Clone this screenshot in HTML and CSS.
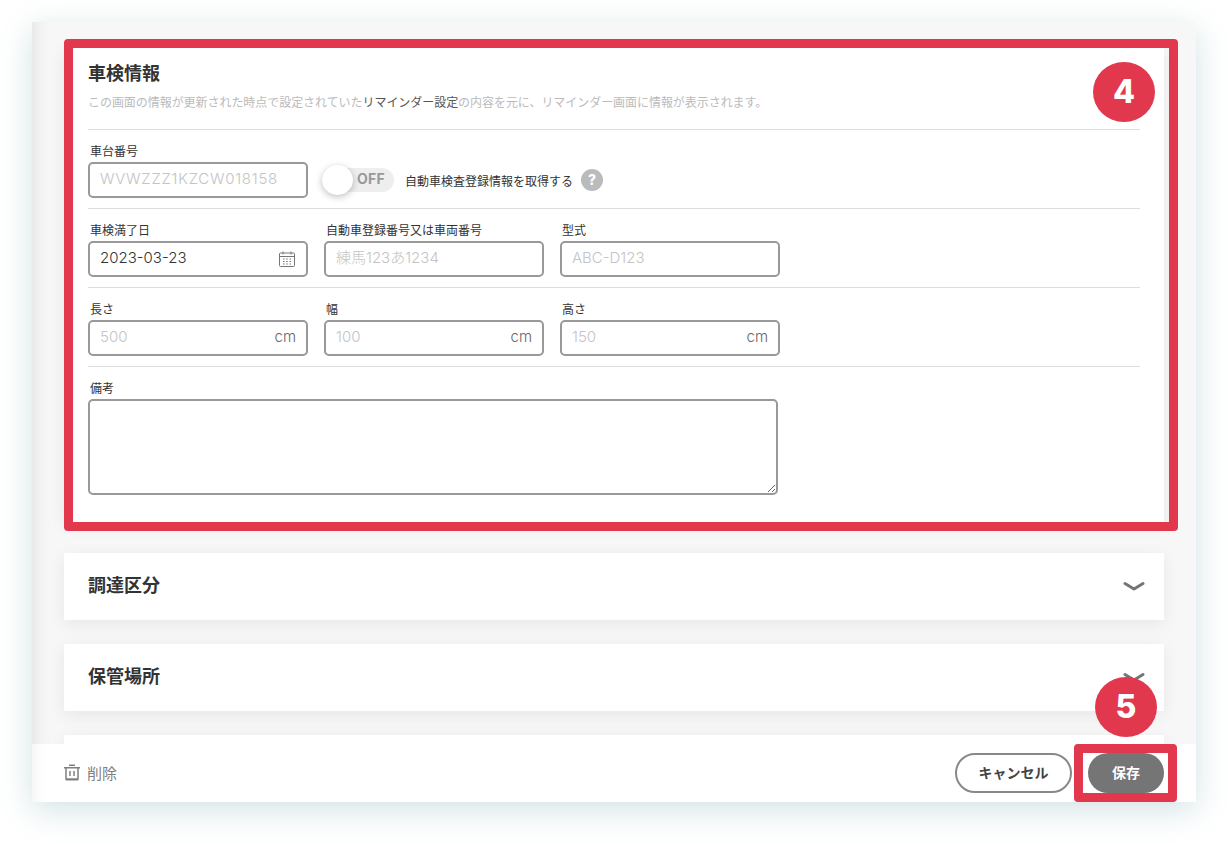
FILE: index.html
```html
<!DOCTYPE html>
<html lang="ja">
<head>
    <meta charset="UTF-8">
    <meta name="viewport" content="width=device-width, initial-scale=1.0">
    <title>車検情報</title>
    <link rel="stylesheet" href="styles.css">
</head>
<body>
    <div class="window">
        <div class="main">
            <div class="card-above"></div>

            <div class="card-wrap">
                <div class="card">
                    <h2 class="card-title">車検情報</h2>
                    <p class="card-desc">この画面の情報が更新された時点で設定されていた<span class="desc-link">リマインダー設定</span>の内容を元に、リマインダー画面に情報が表示されます。</p>

                    <div class="row">
                        <div class="field">
                            <label class="field-label">車台番号</label>
                            <div class="input-box"><input class="input input-vin" placeholder="WVWZZZ1KZCW018158"></div>
                        </div>
                        <div class="toggle-group">
                            <div class="toggle">
                                <span class="toggle-knob"></span>
                                <span class="toggle-text">OFF</span>
                            </div>
                            <span class="toggle-label">自動車検査登録情報を取得する</span>
                            <span class="help-icon">?</span>
                        </div>
                    </div>

                    <div class="row">
                        <div class="field">
                            <label class="field-label">車検満了日</label>
                            <div class="input-box">
                                <input class="input" value="2023-03-23">
                                <svg class="calendar-icon" width="18" height="18" viewBox="0 0 18 18" fill="none" stroke="#777" stroke-width="1">
                                    <rect x="1.5" y="3" width="15" height="13.5" rx="1"/>
                                    <path d="M1.5 6.5h15M5 1.5v3M13 1.5v3"/>
                                    <path d="M5 9h1.5M8.25 9h1.5M11.5 9h1.5M5 11.5h1.5M8.25 11.5h1.5M11.5 11.5h1.5M5 14h1.5M8.25 14h1.5M11.5 14h1.5" stroke-width="1.1"/>
                                </svg>
                            </div>
                        </div>
                        <div class="field">
                            <label class="field-label">自動車登録番号又は車両番号</label>
                            <div class="input-box"><input class="input" placeholder="練馬123あ1234"></div>
                        </div>
                        <div class="field">
                            <label class="field-label">型式</label>
                            <div class="input-box"><input class="input" placeholder="ABC-D123"></div>
                        </div>
                    </div>

                    <div class="row">
                        <div class="field">
                            <label class="field-label">長さ</label>
                            <div class="input-box"><input class="input" placeholder="500"><span class="unit">cm</span></div>
                        </div>
                        <div class="field">
                            <label class="field-label">幅</label>
                            <div class="input-box"><input class="input" placeholder="100"><span class="unit">cm</span></div>
                        </div>
                        <div class="field">
                            <label class="field-label">高さ</label>
                            <div class="input-box"><input class="input" placeholder="150"><span class="unit">cm</span></div>
                        </div>
                    </div>

                    <div class="row row-last">
                        <div class="field">
                            <label class="field-label">備考</label>
                            <textarea class="textarea"></textarea>
                        </div>
                    </div>
                </div>
                <div class="frame frame-card"></div>
                <div class="badge badge-4">4</div>
            </div>

            <div class="card card-closed">
                <h2 class="card-title">調達区分</h2>
                <svg class="chevron" width="22" height="12" viewBox="0 0 22 12" fill="none" stroke="#757575" stroke-width="3" stroke-linecap="round" stroke-linejoin="round"><path d="M2 2.5l9 5.5 9-5.5"/></svg>
            </div>
            <div class="card card-closed">
                <h2 class="card-title">保管場所</h2>
                <svg class="chevron" width="22" height="12" viewBox="0 0 22 12" fill="none" stroke="#757575" stroke-width="3" stroke-linecap="round" stroke-linejoin="round"><path d="M2 2.5l9 5.5 9-5.5"/></svg>
            </div>
            <div class="card card-closed"></div>
        </div>

        <div class="footer">
            <div class="delete">
                <svg width="16" height="17" viewBox="0 0 16 17" fill="none" stroke="#808080" stroke-width="1.5">
                    <path d="M5 1.25h6M0 3.75h16"/>
                    <path d="M2 3.75v11.5h12V3.75"/>
                    <path d="M6 7v5M10 7v5"/>
                    <path d="M2 15.5h12" stroke-width="2"/>
                </svg>
                <span>削除</span>
            </div>
            <div class="footer-actions">
                <button class="btn btn-cancel">キャンセル</button>
                <div class="save-wrap">
                    <button class="btn btn-save">保存</button>
                    <div class="frame frame-save"></div>
                    <div class="badge badge-5">5</div>
                </div>
            </div>
        </div>
    </div>
</body>
</html>
```

FILE: styles.css
```css
* {
    box-sizing: border-box;
}

body {
    margin: 0;
    height: 844px;
    overflow: hidden;
    background: #fff;
    font-family: Inter, "Noto Sans CJK JP", sans-serif;
    color: #333;
}

.window {
    display: flex;
    flex-direction: column;
    width: 1164px;
    height: 780px;
    margin: 22px 0 0 32px;
    background: #f7f7f7;
    box-shadow: 0 8px 30px rgba(70, 135, 150, 0.24);
}

.main {
    flex: 1;
    display: flex;
    flex-direction: column;
    gap: 24px;
    padding: 0 32px;
    overflow: hidden;
    box-shadow: inset 18px 0 18px -16px rgba(0, 0, 0, 0.09);
}

.card-above {
    flex: none;
    height: 0;
    margin-bottom: 2px;
    box-shadow: 0 2px 10px rgba(0, 0, 0, 0.07);
}

.card-wrap {
    position: relative;
    flex: none;
    margin-bottom: 7px;
}

.card {
    flex: none;
    background: #fff;
    box-shadow: 0 4px 16px rgba(0, 0, 0, 0.07);
    padding: 13px 24px 27px;
}

.card-title {
    margin: 0;
    font-size: 18px;
    line-height: 26px;
    font-weight: 700;
    color: #333;
}

.card-desc {
    margin: 8px 0 18px;
    font-size: 12px;
    line-height: 16px;
    letter-spacing: -0.05px;
    color: #bbb;
}

.desc-link {
    color: #555;
}

.card-closed {
    display: flex;
    justify-content: space-between;
    align-items: center;
    height: 67px;
    padding: 0 19px 2px 24px;
}

.chevron {
    margin-top: 2px;
}

.row {
    display: flex;
    gap: 16px;
    padding: 12px 0 10px;
    border-top: 1px solid #ddd;
}

.row-last {
    padding-bottom: 0;
}

.field {
    width: 220px;
}

.field-label {
    display: block;
    height: 16px;
    margin-bottom: 4px;
    padding: 2px 0 0 2px;
    font-size: 12px;
    line-height: 16px;
    color: #333;
}

.input-box {
    display: flex;
    align-items: center;
    height: 36px;
    padding: 0 10px 3px;
    background: #fff;
    border: 2px solid #999;
    border-radius: 5px;
}

.input {
    flex: 1;
    min-width: 0;
    border: none;
    outline: none;
    padding: 0;
    font-family: inherit;
    font-size: 15px;
    font-weight: 300;
    color: #333;
    background: none;
}

.input::placeholder {
    color: #c4c4c4;
    opacity: 1;
}

.input-vin {
    letter-spacing: 0.75px;
}

.unit {
    font-size: 15px;
    font-weight: 300;
    color: #666;
}

.calendar-icon {
    flex: none;
    margin: 3px 0 0 2px;
}

.textarea {
    display: block;
    width: 690px;
    height: 96px;
    border: 2px solid #999;
    border-radius: 5px;
    outline: none;
    background: #fff;
}

.toggle-group {
    display: flex;
    align-items: center;
    height: 36px;
    margin-top: 20px;
    margin-left: -2px;
}

.toggle {
    position: relative;
    width: 72px;
    height: 24px;
    border-radius: 12px;
    background: #eee;
}

.toggle-knob {
    position: absolute;
    left: 0;
    top: -3px;
    width: 31px;
    height: 30px;
    border-radius: 50%;
    background: #fff;
    box-shadow: 0 2px 7px rgba(0, 0, 0, 0.25);
}

.toggle-text {
    position: absolute;
    left: 35px;
    top: 0;
    font-size: 14px;
    line-height: 22px;
    letter-spacing: 0.3px;
    font-weight: 700;
    color: #999;
}

.toggle-label {
    margin-left: 11px;
    font-size: 12px;
    color: #333;
}

.help-icon {
    width: 22px;
    height: 22px;
    margin-left: 8px;
    border-radius: 50%;
    background: #bbb;
    color: #fff;
    font-size: 14px;
    line-height: 22px;
    font-weight: 800;
    text-align: center;
}

.footer {
    position: relative;
    flex: none;
    display: flex;
    justify-content: space-between;
    align-items: center;
    height: 58px;
    padding: 0 32px;
    background: #fff;
    box-shadow: inset 18px 0 16px -16px rgba(0, 0, 0, 0.06);
}

.delete {
    display: flex;
    align-items: center;
    gap: 7px;
    padding-bottom: 2px;
    font-size: 15px;
    color: #808080;
}

.footer-actions {
    display: flex;
    gap: 16px;
}

.save-wrap {
    position: relative;
}

.btn {
    display: block;
    height: 40px;
    border-radius: 20px;
    font-family: inherit;
    font-size: 14px;
    font-weight: 700;
    padding: 0 0 3px;
}

.btn-cancel {
    width: 117px;
    background: #fff;
    border: 2px solid #888;
    color: #444;
}

.btn-save {
    width: 76px;
    background: #757575;
    border: none;
    color: #fff;
}

.frame {
    position: absolute;
    border: 9px solid #e1384d;
    border-radius: 4px;
    pointer-events: none;
}

.frame-card {
    top: -9px;
    left: 0;
    right: -14px;
    bottom: -9px;
}

.frame-save {
    top: -9px;
    left: -14px;
    right: -13px;
    bottom: -9px;
}

.badge {
    position: absolute;
    width: 62px;
    height: 60px;
    border-radius: 50%;
    background: #e1384d;
    color: #fff;
    font-size: 32px;
    line-height: 60px;
    font-weight: 800;
    text-align: center;
}

.badge-4 {
    top: 14px;
    right: 9px;
}

.badge-5 {
    top: -76px;
    right: 7px;
}
```
